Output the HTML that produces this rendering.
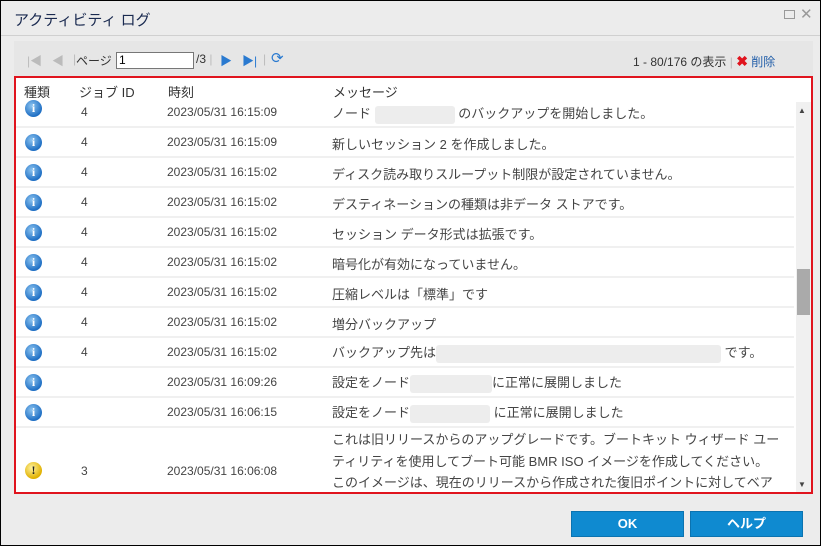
<!DOCTYPE html>
<html><head><meta charset="utf-8"><style>
*{margin:0;padding:0;box-sizing:border-box}
body{width:821px;height:546px;overflow:hidden;background:#000;font-family:"Liberation Sans","Noto Sans CJK JP",sans-serif;}
.win{position:absolute;left:1px;top:1px;width:819px;height:544px;background:#ececec}
.title{position:absolute;left:13px;top:8px;font-size:15px;color:#1a2a50}
.tline{position:absolute;left:0;top:34px;width:819px;height:1px;background:#d0d0d0}
.tb{position:absolute;top:51px;font-size:12px;color:#333}
.box{position:absolute;left:13px;top:75px;width:799px;height:418px;border:2px solid #e0141e;background:#fff;overflow:hidden}
.hdr{position:absolute;top:0;left:0;height:24px;width:795px;background:#fff;font-size:13px;color:#333}
.hdr span{position:absolute;top:4px}
.row{position:absolute;left:0;width:778px;border-bottom:2px solid #f0f0f0;font-size:12px;color:#444;background:#fff}
.row span{position:absolute}
.row span.m{font-size:13px}
.ic{width:17px;height:17px;border-radius:50%;background:radial-gradient(circle at 40% 35%,#8cc4f0,#1f6fc4 70%);color:#fff;font:bold 12px "Liberation Serif",serif;text-align:center;line-height:17px}
.blur{display:inline-block;background:#ededed;height:18px;vertical-align:middle;border-radius:3px}
.sb{position:absolute;left:780px;top:24px;width:15px;height:392px;background:#f0f0f0}
.btn{position:absolute;top:510px;height:26px;background:#0f8ad0;border:1px solid #0b73b0;color:#fff;font-size:13px;font-weight:bold;text-align:center;line-height:24px}
</style></head><body><div class="win">
<div class="title">アクティビティ ログ</div>
<div style="position:absolute;left:783px;top:9px;width:11px;height:9px;border:1px solid #999"></div>
<div style="position:absolute;left:799px;top:4px;font-size:15px;color:#999">✕</div>
<div class="tline"></div>
<div style="position:absolute;left:13px;top:40px;width:799px;height:35px;background:#e6e6e6"></div>
<div class="tb" style="left:26px;color:#bbb">|◀</div>
<div class="tb" style="left:51px;color:#bbb">◀</div>
<div class="tb" style="left:72px;color:#bbb">|</div>
<div class="tb" style="left:75px">ページ</div>
<div style="position:absolute;left:115px;top:51px;width:78px;height:17px;border:1px solid #777;background:#fff;font-size:12px;padding-left:2px;line-height:15px">1</div>
<div class="tb" style="left:195px">/3 <span style="color:#bbb">|</span></div>
<div class="tb" style="left:219px;color:#2a7ad0">▶</div>
<div class="tb" style="left:241px;color:#2a7ad0">▶|</div>
<div class="tb" style="left:262px;color:#bbb">|</div>
<div class="tb" style="left:270px;color:#2a7ad0;font-size:15px;top:48px">⟳</div>
<div class="tb" style="left:632px;top:52px;color:#333">1 - 80/176 の表示 <span style="color:#bbb">|</span> <b style="color:#e0141e;font-size:14px">✖</b> <span style="color:#1f5ca8">削除</span></div>
<div class="box">
<div class="hdr"><span style="left:8px">種類</span><span style="left:63px">ジョブ ID</span><span style="left:152px">時刻</span><span style="left:317px">メッセージ</span></div>
<div class="row" style="top:20px;height:30px"><span class="ic" style="left:9px;top:2px">i</span><span style="left:65px;top:7px">4</span><span style="left:151px;top:7px">2023/05/31 16:15:09</span><span class="m" style="left:316px;top:5px">ノード <i class="blur" style="width:80px"></i> のバックアップを開始しました。</span></div>
<div class="row" style="top:50px;height:30px"><span class="ic" style="left:9px;top:6px">i</span><span style="left:65px;top:7px">4</span><span style="left:151px;top:7px">2023/05/31 16:15:09</span><span class="m" style="left:316px;top:6px">新しいセッション 2 を作成しました。</span></div>
<div class="row" style="top:80px;height:30px"><span class="ic" style="left:9px;top:6px">i</span><span style="left:65px;top:7px">4</span><span style="left:151px;top:7px">2023/05/31 16:15:02</span><span class="m" style="left:316px;top:6px">ディスク読み取りスループット制限が設定されていません。</span></div>
<div class="row" style="top:110px;height:30px"><span class="ic" style="left:9px;top:6px">i</span><span style="left:65px;top:7px">4</span><span style="left:151px;top:7px">2023/05/31 16:15:02</span><span class="m" style="left:316px;top:6px">デスティネーションの種類は非データ ストアです。</span></div>
<div class="row" style="top:140px;height:30px"><span class="ic" style="left:9px;top:6px">i</span><span style="left:65px;top:7px">4</span><span style="left:151px;top:7px">2023/05/31 16:15:02</span><span class="m" style="left:316px;top:6px">セッション データ形式は拡張です。</span></div>
<div class="row" style="top:170px;height:30px"><span class="ic" style="left:9px;top:6px">i</span><span style="left:65px;top:7px">4</span><span style="left:151px;top:7px">2023/05/31 16:15:02</span><span class="m" style="left:316px;top:6px">暗号化が有効になっていません。</span></div>
<div class="row" style="top:200px;height:30px"><span class="ic" style="left:9px;top:6px">i</span><span style="left:65px;top:7px">4</span><span style="left:151px;top:7px">2023/05/31 16:15:02</span><span class="m" style="left:316px;top:6px">圧縮レベルは「標準」です</span></div>
<div class="row" style="top:230px;height:30px"><span class="ic" style="left:9px;top:6px">i</span><span style="left:65px;top:7px">4</span><span style="left:151px;top:7px">2023/05/31 16:15:02</span><span class="m" style="left:316px;top:6px">増分バックアップ</span></div>
<div class="row" style="top:260px;height:30px"><span class="ic" style="left:9px;top:6px">i</span><span style="left:65px;top:7px">4</span><span style="left:151px;top:7px">2023/05/31 16:15:02</span><span class="m" style="left:316px;top:4px">バックアップ先は<i class="blur" style="width:285px"></i> です。</span></div>
<div class="row" style="top:290px;height:30px"><span class="ic" style="left:9px;top:6px">i</span><span style="left:151px;top:7px">2023/05/31 16:09:26</span><span class="m" style="left:316px;top:4px">設定をノード<i class="blur" style="width:82px"></i>に正常に展開しました</span></div>
<div class="row" style="top:320px;height:30px"><span class="ic" style="left:9px;top:6px">i</span><span style="left:151px;top:7px">2023/05/31 16:06:15</span><span class="m" style="left:316px;top:4px">設定をノード<i class="blur" style="width:80px"></i> に正常に展開しました</span></div>
<div class="row" style="top:350px;height:70px;border:none"><span class="ic" style="left:9px;top:34px;background:radial-gradient(circle at 40% 35%,#fff3a0,#e0b000 70%);color:#222">!</span><span style="left:65px;top:36px">3</span><span style="left:151px;top:36px">2023/05/31 16:06:08</span><span class="m" style="left:316px;top:1px;width:460px;line-height:21.5px">これは旧リリースからのアップグレードです。ブートキット ウィザード ユーティリティを使用してブート可能 BMR ISO イメージを作成してください。<br>このイメージは、現在のリリースから作成された復旧ポイントに対してベア</span></div>
<div class="sb"><div style="position:absolute;left:2px;top:4px;font-size:8px;color:#444">▲</div><div style="position:absolute;left:1px;top:167px;width:13px;height:46px;background:#aaa"></div><div style="position:absolute;left:2px;top:378px;font-size:8px;color:#444">▼</div></div>
</div>
<div class="btn" style="left:570px;width:113px">OK</div>
<div class="btn" style="left:689px;width:113px">ヘルプ</div>
</div></body></html>
